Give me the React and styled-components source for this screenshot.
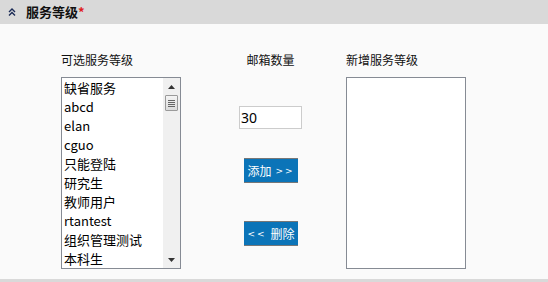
import React from "react";
import styled, { createGlobalStyle } from "styled-components";

const Global = createGlobalStyle`
  html, body { margin: 0; padding: 0; background: #fafafa; }
  body { font-family: "Noto Sans CJK SC", "Noto Sans", sans-serif; color: #000; }
`;

const Page = styled.div`
  width: 548px;
  height: 282px;
  display: flex;
  flex-direction: column;
  overflow: hidden;
  background: #fafafa;
`;

const Header = styled.div`
  height: 24px;
  background: #d9d9d9;
  display: flex;
  align-items: center;
  padding-left: 8px;
  gap: 10px;
  flex-shrink: 0;
`;

const Title = styled.div`
  font-size: 13px;
  font-weight: bold;
  line-height: 24px;
  color: #111;
`;

const Star = styled.span`
  color: #e02020;
  font-weight: bold;
`;

const Body = styled.div`
  flex: 1;
  display: flex;
  align-items: flex-start;
  padding: 28px 0 0 61px;
`;

const Footer = styled.div`
  height: 3px;
  background: #d9d9d9;
  flex-shrink: 0;
`;

const Column = styled.div`
  display: flex;
  flex-direction: column;
  align-items: ${(p) => (p.$center ? "center" : "flex-start")};
  width: ${(p) => p.$w}px;
  margin-left: ${(p) => p.$ml || 0}px;
`;

const Label = styled.div`
  font-size: 12px;
  line-height: 16px;
  height: 16px;
  white-space: nowrap;
  color: #111;
`;

const ListBox = styled.div`
  margin-top: 9px;
  width: 120px;
  height: 192px;
  box-sizing: border-box;
  border: 1px solid #868b94;
  background: #fff;
  display: flex;
  overflow: hidden;
`;

const Items = styled.div`
  flex: 1;
  padding-left: 2px;
`;

const Item = styled.div`
  font-size: 13px;
  line-height: 19px;
  height: 19px;
  white-space: nowrap;
  color: #000;
`;

const ScrollBar = styled.div`
  width: 17px;
  background: #f0f0f0;
  display: flex;
  flex-direction: column;
  align-items: center;
`;

const Arrow = styled.div`
  height: 17px;
  display: flex;
  align-items: center;
  justify-content: center;
  width: 100%;
`;

const Thumb = styled.div`
  width: 13px;
  height: 16px;
  box-sizing: border-box;
  border: 1px solid #9a9a9a;
  background: linear-gradient(#f4f4f4, #dcdcdc);
  display: flex;
  flex-direction: column;
  align-items: center;
  justify-content: center;
  gap: 1px;
  border-radius: 1px;
`;

const Grip = styled.div`
  width: 7px;
  height: 1px;
  background: #666;
`;

const Spacer = styled.div`
  flex: 1;
`;

const Input = styled.input`
  margin-top: 38px;
  width: 63px;
  height: 23px;
  box-sizing: border-box;
  border: 1px solid #cccccc;
  background: #fff;
  padding: 0 0 0 1px;
  font-family: "Noto Sans", sans-serif;
  font-size: 14px;
  color: #000;
  outline: none;
`;

const Button = styled.button`
  margin-top: ${(p) => p.$mt}px;
  margin-left: 5px;
  align-self: flex-start;
  width: 54px;
  height: 25px;
  box-sizing: border-box;
  border: none;
  border-top: 1px solid #777;
  border-bottom: 1px solid #777;
  background: #0b74b8;
  color: #fff;
  font-family: "Noto Sans CJK SC", sans-serif;
  font-size: 12px;
  padding: 0;
  display: flex;
  align-items: center;
  justify-content: center;
  gap: 4px;
  cursor: pointer;
`;

const Chev = styled.span`
  font-family: "DejaVu Sans", sans-serif;
  font-size: 9px;
  letter-spacing: 2px;
`;

const left = ["缺省服务", "abcd", "elan", "cguo", "只能登陆", "研究生", "教师用户", "rtantest", "组织管理测试", "本科生"];

export default function App() {
  return (
    <Page>
      <Global />
      <Header>
        <svg width="8" height="8" viewBox="0 0 8 8">
          <path d="M1 4 L4 1 L7 4" stroke="#1a2a55" strokeWidth="1.4" fill="none" />
          <path d="M1 7.5 L4 4.5 L7 7.5" stroke="#1a2a55" strokeWidth="1.4" fill="none" />
        </svg>
        <Title>
          服务等级<Star>*</Star>
        </Title>
      </Header>
      <Body>
        <Column $w={120}>
          <Label>可选服务等级</Label>
          <ListBox>
            <Items>
              {left.map((t) => (
                <Item key={t}>{t}</Item>
              ))}
            </Items>
            <ScrollBar>
              <Arrow>
                <svg width="7" height="4" viewBox="0 0 7 4">
                  <path d="M0 4 L3.5 0 L7 4 Z" fill="#333" />
                </svg>
              </Arrow>
              <Thumb>
                <Grip />
                <Grip />
                <Grip />
                <Grip />
              </Thumb>
              <Spacer />
              <Arrow>
                <svg width="7" height="4" viewBox="0 0 7 4">
                  <path d="M0 0 L7 0 L3.5 4 Z" fill="#333" />
                </svg>
              </Arrow>
            </ScrollBar>
          </ListBox>
        </Column>
        <Column $w={63} $ml={58} $center>
          <Label>邮箱数量</Label>
          <Input defaultValue="30" />
          <Button $mt={29}>
            添加 <Chev>&gt;&gt;</Chev>
          </Button>
          <Button $mt={38}>
            <Chev>&lt;&lt;</Chev> 删除
          </Button>
        </Column>
        <Column $w={120} $ml={44}>
          <Label>新增服务等级</Label>
          <ListBox />
        </Column>
      </Body>
      <Footer />
    </Page>
  );
}
